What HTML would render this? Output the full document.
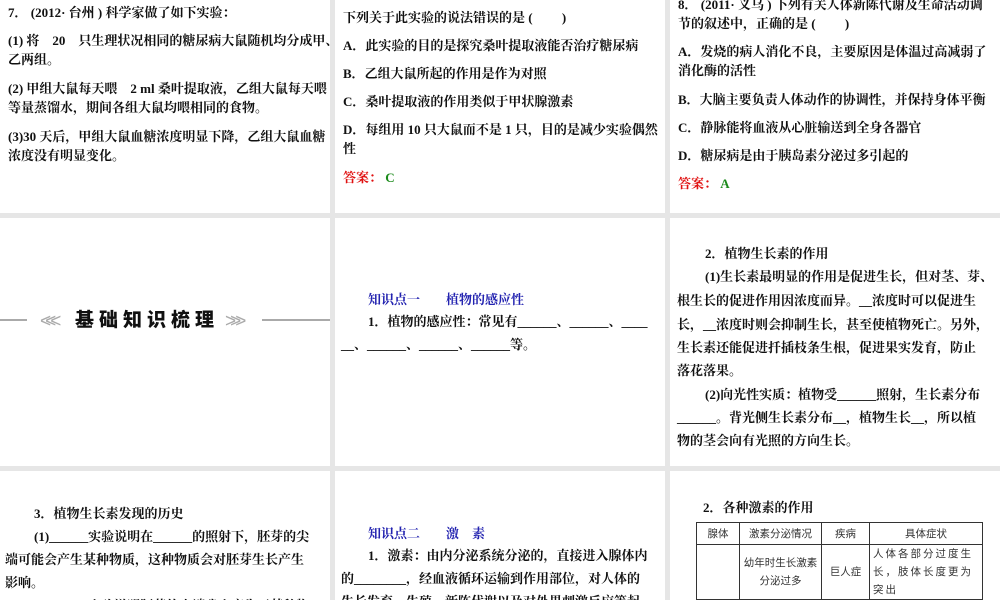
<!DOCTYPE html>
<html><head><meta charset="utf-8"><style>
body{margin:0;width:1000px;height:600px;background:#e6e6e6;position:relative;overflow:hidden;font-family:"Liberation Serif","Noto Serif CJK SC",serif;color:#111}
.p{position:absolute;background:#fff;overflow:hidden}
.l{position:absolute;white-space:nowrap;font-size:13px;line-height:18px;font-weight:bold}
.b{color:#2323b0}
.r{color:#e01010}
.g{color:#1a8a1a}
table{position:absolute;border-collapse:collapse;font-family:"Noto Sans CJK SC",sans-serif;font-size:10.5px;color:#333;table-layout:fixed}
td{border:1px solid #333;text-align:center;padding:0 3px;line-height:18px}
</style></head><body>
<div class="p" style="left:0;top:0;width:330px;height:213px">
<div class="l" style="left:8px;top:4px">7． (2012· 台州 ) 科学家做了如下实验：</div>
<div class="l" style="left:8px;top:32px">(1) 将　20　只生理状况相同的糖尿病大鼠随机均分成甲、</div>
<div class="l" style="left:8px;top:51px">乙两组。</div>
<div class="l" style="left:8px;top:80px">(2) 甲组大鼠每天喂　2 ml 桑叶提取液，乙组大鼠每天喂</div>
<div class="l" style="left:8px;top:99px">等量蒸馏水，期间各组大鼠均喂相同的食物。</div>
<div class="l" style="left:8px;top:128px">(3)30 天后，甲组大鼠血糖浓度明显下降，乙组大鼠血糖</div>
<div class="l" style="left:8px;top:147px">浓度没有明显变化。</div>
</div>
<div class="p" style="left:335px;top:0;width:330px;height:213px">
<div class="l" style="left:8px;top:9px">下列关于此实验的说法错误的是 (　　 )</div>
<div class="l" style="left:8px;top:37px">A．此实验的目的是探究桑叶提取液能否治疗糖尿病</div>
<div class="l" style="left:8px;top:65px">B．乙组大鼠所起的作用是作为对照</div>
<div class="l" style="left:8px;top:93px">C．桑叶提取液的作用类似于甲状腺激素</div>
<div class="l" style="left:8px;top:121px">D．每组用 10 只大鼠而不是 1 只，目的是减少实验偶然</div>
<div class="l" style="left:8px;top:140px">性</div>
<div class="l" style="left:8px;top:169px"><span class="r">答案：</span> <span class="g">C</span></div>
</div>
<div class="p" style="left:670px;top:0;width:330px;height:213px">
<div class="l" style="left:8px;top:-4px">8． (2011· 义乌 ) 下列有关人体新陈代谢及生命活动调</div>
<div class="l" style="left:8px;top:15px">节的叙述中，正确的是 (　　 )</div>
<div class="l" style="left:8px;top:43px">A．发烧的病人消化不良，主要原因是体温过高减弱了</div>
<div class="l" style="left:8px;top:62px">消化酶的活性</div>
<div class="l" style="left:8px;top:91px">B．大脑主要负责人体动作的协调性，并保持身体平衡</div>
<div class="l" style="left:8px;top:119px">C．静脉能将血液从心脏输送到全身各器官</div>
<div class="l" style="left:8px;top:147px">D．糖尿病是由于胰岛素分泌过多引起的</div>
<div class="l" style="left:8px;top:175px"><span class="r">答案：</span> <span class="g">A</span></div>
</div>

<div class="p" style="left:0;top:218px;width:330px;height:248px">
<div style="position:absolute;left:0;top:101px;width:27px;height:2px;background:#aaa"></div>
<div style="position:absolute;left:262px;top:101px;width:68px;height:2px;background:#aaa"></div>
<div class="l" style="left:40px;top:95px;font-size:19px;color:#aaa;font-weight:normal;letter-spacing:-6px;font-family:'Liberation Sans',sans-serif">&lt;&lt;&lt;</div>
<div class="l" style="left:225px;top:95px;font-size:19px;color:#aaa;font-weight:normal;letter-spacing:-6px;font-family:'Liberation Sans',sans-serif">&gt;&gt;&gt;</div>
<div class="l" style="left:75px;top:89px;font-size:19px;line-height:24px;letter-spacing:5px;font-family:'Noto Sans CJK SC',sans-serif;font-weight:900">基础知识梳理</div>
</div>
<div class="p" style="left:335px;top:218px;width:330px;height:248px">
<div class="l b" style="left:33px;top:73px">知识点一　　植物的感应性</div>
<div class="l" style="left:33px;top:95px">1．植物的感应性：常见有______、______、____</div>
<div class="l" style="left:6px;top:118px">__、______、______、______等。</div>
</div>
<div class="p" style="left:670px;top:218px;width:330px;height:248px">
<div class="l" style="left:35px;top:27px">2．植物生长素的作用</div>
<div class="l" style="left:35px;top:50px">(1)生长素最明显的作用是促进生长，但对茎、芽、</div>
<div class="l" style="left:7px;top:74px">根生长的促进作用因浓度而异。__浓度时可以促进生</div>
<div class="l" style="left:7px;top:98px">长，__浓度时则会抑制生长，甚至使植物死亡。另外，</div>
<div class="l" style="left:7px;top:121px">生长素还能促进扦插枝条生根，促进果实发育，防止</div>
<div class="l" style="left:7px;top:144px">落花落果。</div>
<div class="l" style="left:35px;top:168px">(2)向光性实质：植物受______照射，生长素分布</div>
<div class="l" style="left:7px;top:191px">______。背光侧生长素分布__，植物生长__，所以植</div>
<div class="l" style="left:7px;top:214px">物的茎会向有光照的方向生长。</div>
</div>

<div class="p" style="left:0;top:471px;width:330px;height:129px">
<div class="l" style="left:34px;top:34px">3．植物生长素发现的历史</div>
<div class="l" style="left:34px;top:57px">(1)______实验说明在______的照射下，胚芽的尖</div>
<div class="l" style="left:5px;top:80px">端可能会产生某种物质，这种物质会对胚芽生长产生</div>
<div class="l" style="left:5px;top:103px">影响。</div>
<div class="l" style="left:34px;top:126px">(2)______实验说明胚芽的尖端确实产生了某种物</div>
</div>
<div class="p" style="left:335px;top:471px;width:330px;height:129px">
<div class="l b" style="left:33px;top:54px">知识点二　　激　素</div>
<div class="l" style="left:33px;top:76px">1．激素：由内分泌系统分泌的，直接进入腺体内</div>
<div class="l" style="left:6px;top:99px">的________，经血液循环运输到作用部位，对人体的</div>
<div class="l" style="left:6px;top:122px">生长发育、生殖、新陈代谢以及对外界刺激反应等起</div>
</div>
<div class="p" style="left:670px;top:471px;width:330px;height:129px">
<div class="l" style="left:33px;top:28px">2．各种激素的作用</div>
<table style="left:26px;top:51px;width:287px">
<tr style="height:22px"><td style="width:36px">腺体</td><td style="width:75px">激素分泌情况</td><td style="width:41px">疾病</td><td>具体症状</td></tr>
<tr><td></td><td style="white-space:nowrap;padding:0">幼年时生长激素<br>分泌过多</td><td>巨人症</td><td style="text-align:left;letter-spacing:2px">人体各部分过度生长，肢体长度更为突出</td></tr>
</table>
</div>
</body></html>
